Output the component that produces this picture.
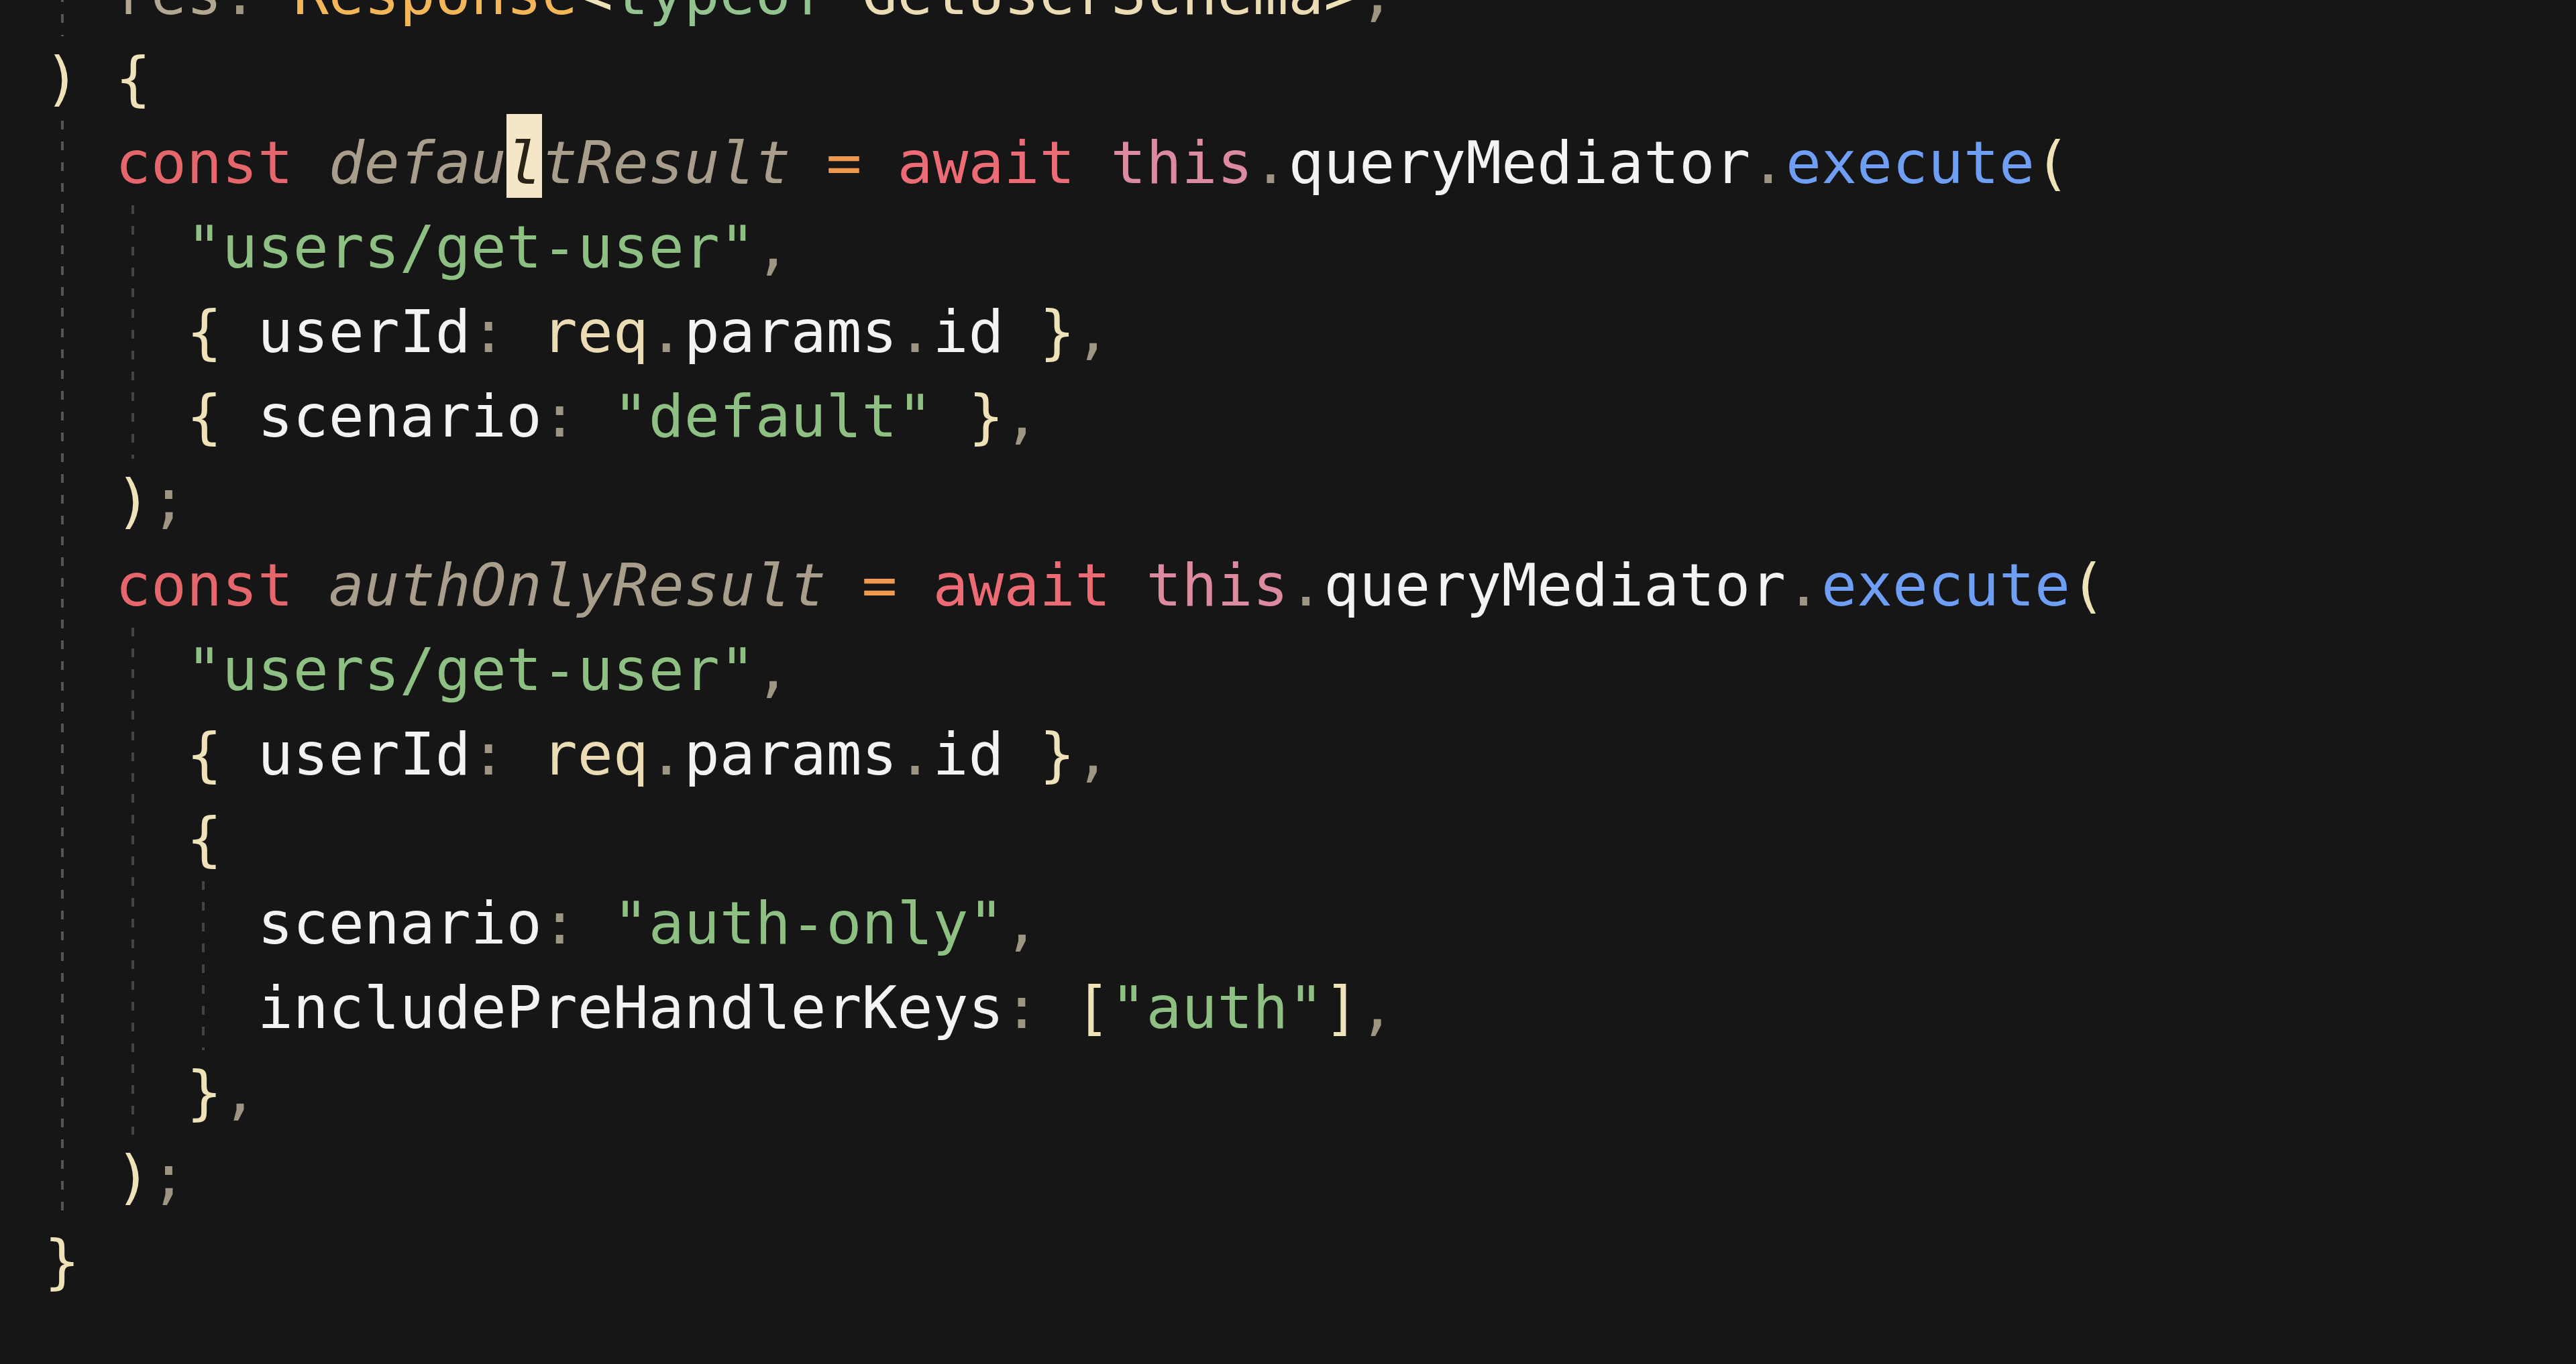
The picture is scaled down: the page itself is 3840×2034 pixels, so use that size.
const c = {
  kw: "text-[#e5676c]",
  aw: "text-[#ec6b75]",
  th: "text-[#dc8aa0]",
  op: "text-[#ef9a4f]",
  vr: "text-[#a99d8b] italic",
  id: "text-[#f3f3f1]",
  pn: "text-[#9e9682]",
  fn: "text-[#6f9ef5]",
  br: "text-[#efe2b9]",
  st: "text-[#8fc083]",
  rq: "text-[#ecdcb6]",
  ty: "text-[#f3b75a]",
  tk: "text-[#93c48f]",
  rs: "text-[#b2a891]",
};

// each line: list of [text, class]
const lines = [
  [["  "], ["res", c.rs], [":", c.pn], [" "], ["Response", c.ty], ["<", c.br], ["typeof", c.tk], [" "], ["GetUserSchema", c.rq], [">", c.br], [";", c.pn]],
  [[")", c.br], [" "], ["{", c.br]],
  [["  "], ["const", c.kw], [" "], ["defau", c.vr], ["CURSOR"], ["tResult", c.vr], [" "], ["=", c.op], [" "], ["await", c.aw], [" "], ["this", c.th], [".", c.pn], ["queryMediator", c.id], [".", c.pn], ["execute", c.fn], ["(", c.br]],
  [["    "], ['"users/get-user"', c.st], [",", c.pn]],
  [["    "], ["{", c.br], [" "], ["userId", c.id], [":", c.pn], [" "], ["req", c.rq], [".", c.pn], ["params", c.id], [".", c.pn], ["id", c.id], [" "], ["}", c.br], [",", c.pn]],
  [["    "], ["{", c.br], [" "], ["scenario", c.id], [":", c.pn], [" "], ['"default"', c.st], [" "], ["}", c.br], [",", c.pn]],
  [["  "], [")", c.br], [";", c.pn]],
  [["  "], ["const", c.kw], [" "], ["authOnlyResult", c.vr], [" "], ["=", c.op], [" "], ["await", c.aw], [" "], ["this", c.th], [".", c.pn], ["queryMediator", c.id], [".", c.pn], ["execute", c.fn], ["(", c.br]],
  [["    "], ['"users/get-user"', c.st], [",", c.pn]],
  [["    "], ["{", c.br], [" "], ["userId", c.id], [":", c.pn], [" "], ["req", c.rq], [".", c.pn], ["params", c.id], [".", c.pn], ["id", c.id], [" "], ["}", c.br], [",", c.pn]],
  [["    "], ["{", c.br]],
  [["      "], ["scenario", c.id], [":", c.pn], [" "], ['"auth-only"', c.st], [",", c.pn]],
  [["      "], ["includePreHandlerKeys", c.id], [":", c.pn], [" "], ["[", c.br], ['"auth"', c.st], ["]", c.br], [",", c.pn]],
  [["    "], ["}", c.br], [",", c.pn]],
  [["  "], [")", c.br], [";", c.pn]],
  [["}", c.br]],
];

// indent guides: left px, top px, height px (relative to code block)
const guides = [
  { left: 91, top: 0, height: 126, tone: "a" },
  { left: 91, top: 252, height: 1638, tone: "a" },
  { left: 196, top: 378, height: 378, tone: "b" },
  { left: 196, top: 1008, height: 756, tone: "b" },
  { left: 301, top: 1386, height: 252, tone: "b" },
];

function Cursor() {
  return (
    <span className="relative inline-block">
      <span className="absolute left-0 top-[-10px] h-[125px] w-full bg-[#f4e6c6]" />
      <span className="relative italic text-[#2a2418]">l</span>
    </span>
  );
}

function App() {
  return (
    <div className="h-[2034px] w-full overflow-hidden bg-[#161617]">
      <div className="relative -mt-[72px] pl-[66px] font-['DejaVu_Sans_Mono','Liberation_Mono',monospace] text-[88px] leading-[126px] whitespace-pre">
        {guides.map((g, i) => (
          <span
            key={i}
            className={
              g.tone === "a"
                ? "absolute w-[4px] bg-[repeating-linear-gradient(to_bottom,#56554f_0px,#56554f_13px,transparent_13px,transparent_31px)]"
                : "absolute w-[4px] bg-[repeating-linear-gradient(to_bottom,#45443f_0px,#45443f_13px,transparent_13px,transparent_31px)]"
            }
            style={{ left: g.left, top: g.top, height: g.height }}
          />
        ))}
        {lines.map((line, i) => (
          <div key={i} className="h-[126px]">
            {line.map(([text, cls], j) =>
              text === "CURSOR" ? (
                <Cursor key={j} />
              ) : (
                <span key={j} className={cls}>
                  {text}
                </span>
              )
            )}
          </div>
        ))}
      </div>
    </div>
  );
}

export default App;
